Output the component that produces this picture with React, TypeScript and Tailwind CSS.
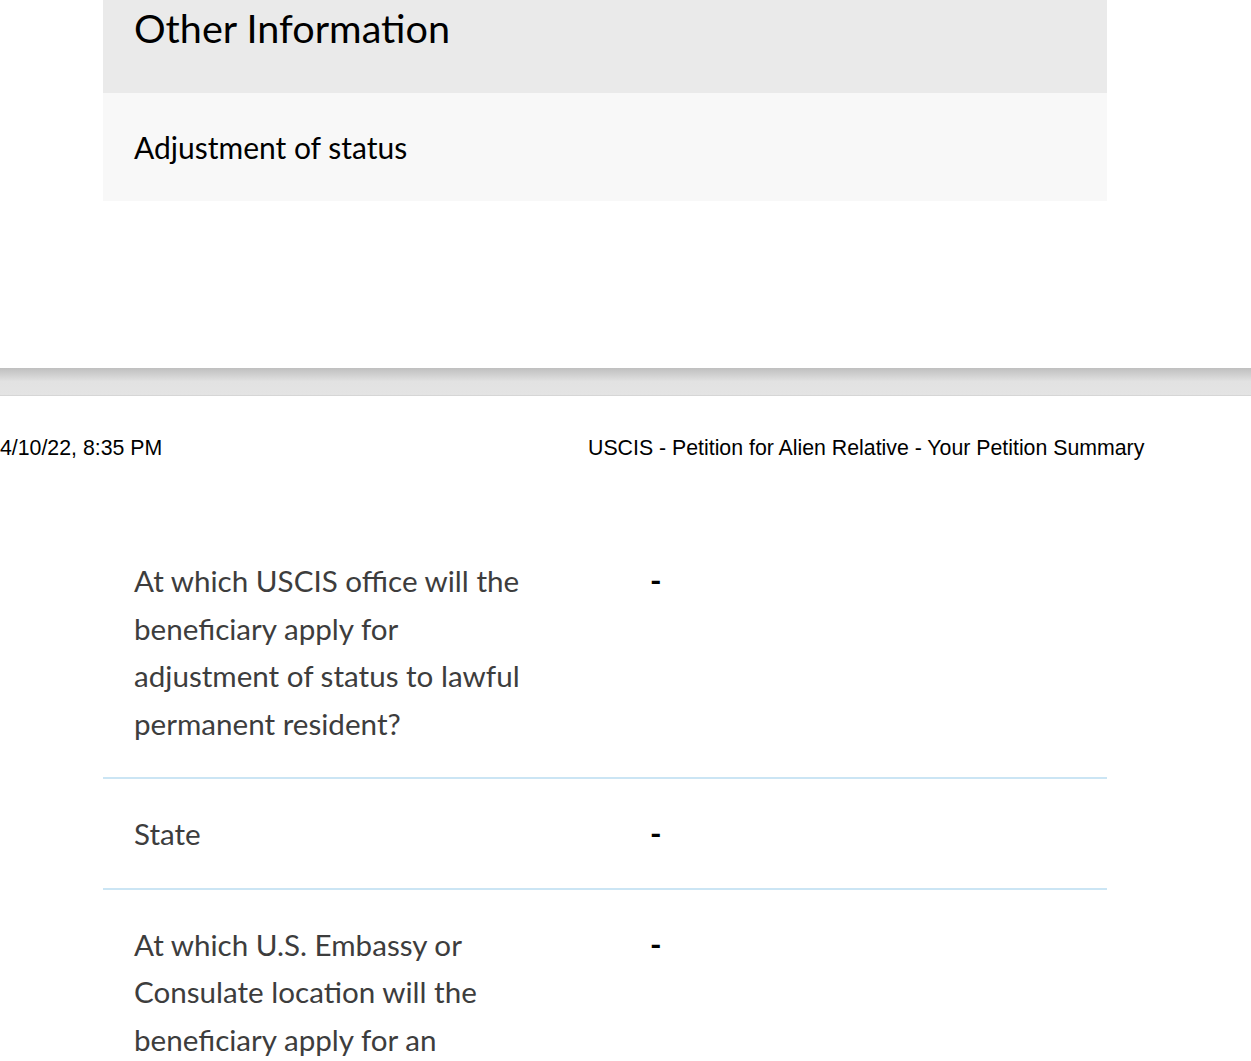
import React from 'react';

const rows = [
  { label: 'At which USCIS office will the beneficiary apply for adjustment of status to lawful permanent resident?', value: '-' },
  { label: 'State', value: '-' },
  { label: 'At which U.S. Embassy or Consulate location will the beneficiary apply for an immigrant visa?', value: '-' },
];

const App: React.FC = () => {
  return (
    <div className="h-[1061px] bg-white font-['Lato','Noto_Sans',sans-serif] overflow-hidden">
      {/* Other Information section */}
      <div className="mx-[103px] w-[1004px]">
        <div className="bg-[#eaeaea] h-[93px] pl-[31px] pt-[3px]">
          <h2 className="text-[39.6px] leading-[50px] text-black">Other Information</h2>
        </div>
        <div className="bg-[#f8f8f8] h-[108px] pl-[31px] flex items-center">
          <p className="text-[30px] text-black">Adjustment of status</p>
        </div>
      </div>

      {/* page break */}
      <div className="mt-[167px] h-[28px] bg-gradient-to-b from-[#bfbfbf] via-[#e2e2e2] to-[#e4e4e4] border-b border-[#d6d6d6]" />

      {/* print header */}
      <div className="h-[104px] flex items-center pt-[1px] font-['Liberation_Sans',Arial,sans-serif] text-[21.3px] text-black">
        <span className="w-[588px]">4/10/22, 8:35 PM</span>
        <span>USCIS - Petition for Alien Relative - Your Petition Summary</span>
      </div>

      <div className="mx-[103px] w-[1004px] mt-[52px]">
        {rows.map((row, i) => (
          <div key={i} className="flex border-b-2 border-[#cbe5f4] pl-[31px] pt-[5px] pb-[30px] [&:not(:first-child)]:pt-[31px]">
            <p className="w-[405px] text-[29.6px] leading-[47.5px] text-[#3d3d3d]">{row.label}</p>
            <p className="ml-[111px] text-[31px] font-bold leading-[47.5px] text-black">{row.value}</p>
          </div>
        ))}
      </div>
    </div>
  );
};

export default App;
